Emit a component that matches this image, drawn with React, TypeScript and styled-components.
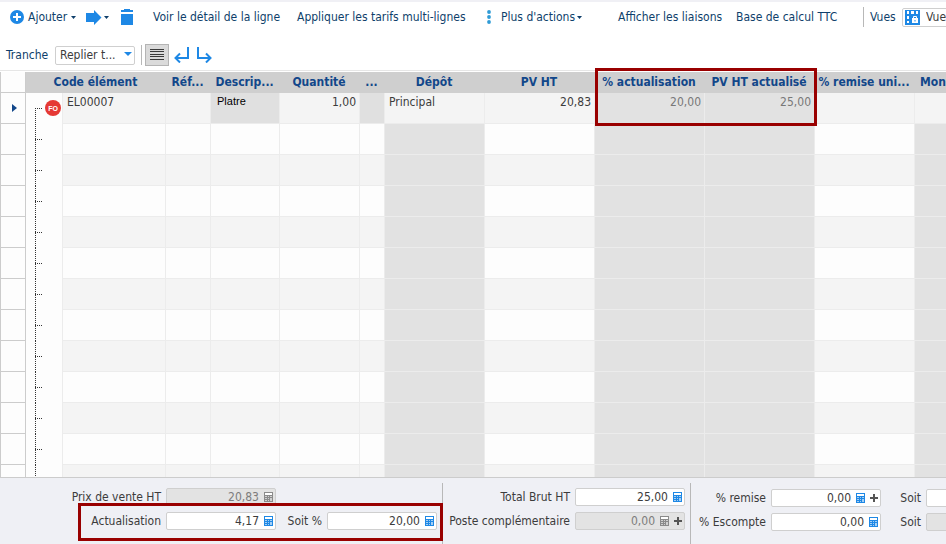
import React, { useId } from 'react';
import styled, { createGlobalStyle, css } from 'styled-components';

const BLUE = '#1e88e5';
const NAVY = '#0f3f6b';
const INK = '#3c3c3c';
const LINE = '#ececec';
const MARK = '#990000';

const GlobalStyle = createGlobalStyle`
  *, *::before, *::after { box-sizing: border-box; }
  body { margin: 0; overflow: hidden; background: #fff; }
  body, button, input, select {
    font-family: 'DejaVu Sans Condensed', 'Noto Sans', sans-serif;
    font-size: 12px;
    line-height: 16px;
  }
  svg { display: block; flex: none; }
`;

const Page = styled.div`
  display: flex;
  flex-direction: column;
  height: 100vh;
  overflow: hidden;
  color: ${NAVY};
  border-top: 2px solid #f0f0f5;
`;

const Toolbar = styled.div<{ $left: number; $top?: number }>`
  display: flex;
  flex: none;
  align-items: center;
  height: ${p => (p.$top ? 38 : 30)}px;
  padding: ${p => p.$top ?? 0}px 0 0 ${p => p.$left}px;
  white-space: nowrap;
`;

const ToolButton = styled.button<{ $width: number; $gap?: number }>`
  display: flex;
  flex: none;
  align-items: center;
  gap: ${p => p.$gap ?? 2}px;
  width: ${p => p.$width}px;
  height: 22px;
  padding: 0;
  border: 0;
  background: none;
  color: inherit;
  white-space: nowrap;
`;

const ToggleButton = styled.button`
  display: flex;
  flex: none;
  align-items: center;
  justify-content: center;
  width: 24px;
  height: 22px;
  margin: 0 5px 0 3px;
  padding: 0;
  border: 1px solid #b4b4b4;
  background: #dadada;
`;

const Separator = styled.span`
  flex: none;
  width: 1px;
  height: 20px;
  background: #b8b8b8;
`;

const ToolLabel = styled.label<{ $width: number }>`
  flex: none;
  width: ${p => p.$width}px;
`;

const ViewLabel = styled(ToolLabel)`
  padding-left: 6px;
`;

const Spacer = styled.span`
  flex: none;
  width: 6px;
`;

const SelectBox = styled.span<{ $width: number }>`
  display: flex;
  flex: none;
  align-items: center;
  width: ${p => p.$width}px;
  height: 19px;
  padding: 0 2px;
  border: 1px solid #cfcfcf;
  border-radius: 2px;
  background: #fff;
`;

const Select = styled.select<{ $indent: number }>`
  flex: 1;
  min-width: 0;
  height: 17px;
  padding: 0 0 0 ${p => p.$indent}px;
  border: 0;
  background: none;
  color: ${INK};
  appearance: none;
`;

const GridPanel = styled.main`
  position: relative;
  flex: 1;
  min-height: 0;
  border-top: 1px solid #e6e6e6;
`;

const GridClip = styled.div`
  height: 100%;
  padding-top: 1px;
  overflow: hidden;
`;

const Table = styled.table`
  width: 1014px;
  table-layout: fixed;
  border-collapse: separate;
  border-spacing: 0;
`;

const HeadCell = styled.th<{ $start?: boolean }>`
  height: 21px;
  padding: 0 ${p => (p.$start ? 6 : 4)}px 2px;
  background: #cfcfcf;
  color: #12478a;
  font-weight: bold;
  text-align: ${p => (p.$start ? 'left' : 'center')};
  white-space: nowrap;
`;

const RowMarker = styled.td`
  padding: 0 0 0 11px;
  border: solid #cccccc;
  border-width: 0 1px 1px;
  background: #fdfdfd;
  vertical-align: middle;
`;

const TreeCell = styled.td`
  padding: 0;
  background: #fdfdfd;
`;

type Tone = 'plain' | 'locked' | 'shade';

const Cell = styled.td<{ $tone: Tone; $odd: boolean; $right?: boolean; $muted?: boolean; $small?: boolean }>`
  height: 31px;
  padding: 1px 3px 0 4px;
  border: solid ${LINE};
  border-width: 0 0 1px 1px;
  background: ${p => (p.$tone === 'locked' ? '#e2e2e2' : p.$tone === 'shade' ? '#e0e0e0' : p.$odd ? '#f4f4f4' : '#fdfdfd')};
  color: ${p => (p.$muted ? '#787878' : INK)};
  text-align: ${p => (p.$right ? 'right' : 'left')};
  vertical-align: top;
  white-space: nowrap;
  ${p => p.$small && css`
    padding: 0 3px 0 6px;
    color: #000;
    font-family: 'Liberation Sans', sans-serif;
    font-size: 11px;
  `}
`;

const Highlight = styled.div<{ $left: number; $top: number; $width: number; $height: number }>`
  position: absolute;
  z-index: 1;
  left: ${p => p.$left}px;
  top: ${p => p.$top}px;
  width: ${p => p.$width}px;
  height: ${p => p.$height}px;
  border: 3px solid ${MARK};
  pointer-events: none;
`;

const Footer = styled.footer`
  display: flex;
  flex: none;
  height: 67px;
  padding-top: 5px;
  border-top: 1px solid #cccccc;
  background: #eff0f5;
  color: ${INK};
`;

const TotalsGroup = styled.section<{ $columns: string; $top: number; $divided?: boolean }>`
  position: relative;
  display: grid;
  flex: none;
  grid-template-columns: ${p => p.$columns};
  grid-auto-rows: 18px;
  align-items: center;
  gap: 6px 5px;
  padding: ${p => p.$top}px 5px 0 0;
  border-left: ${p => (p.$divided ? '1px solid #b8b8b8' : '0')};
`;

const FieldLabel = styled.label`
  text-align: right;
  white-space: nowrap;
`;

const FieldBox = styled.span<{ $off?: boolean }>`
  display: flex;
  align-items: center;
  gap: 5px;
  height: 18px;
  padding-right: 2px;
  border: 1px solid #cfcfcf;
  border-radius: 2px;
  background: ${p => (p.$off ? '#e3e3e3' : '#fff')};
`;

const FieldInput = styled.input`
  flex: 1;
  min-width: 0;
  height: 16px;
  padding: 0;
  border: 0;
  background: none;
  color: ${INK};
  text-align: right;
  &:disabled { color: #7c7c7c; }
`;

const IconButton = styled.button`
  display: flex;
  flex: none;
  padding: 0;
  border: 0;
  background: none;
`;

const Caret = () => (
  <svg width="5" height="3" viewBox="0 0 5 3" aria-hidden="true">
    <path d="M0 0h5L2.500 3z" fill={NAVY} />
  </svg>
);

const SelectCaret = () => (
  <svg width="8" height="14" viewBox="0 0 8 14" aria-hidden="true">
    <path d="M0 4h8L4 8z" fill={BLUE} />
  </svg>
);

const AddIcon = () => (
  <svg width="14" height="14" viewBox="0 0 14 14" aria-hidden="true">
    <circle cx="7" cy="7" r="7" fill={BLUE} />
    <path d="M7 3v8M3 7h8" stroke="#fff" strokeWidth="2" />
  </svg>
);

const ArrowIcon = () => (
  <svg width="17" height="16" viewBox="0 0 17 16" aria-hidden="true">
    <path d="M1 4h8V1l7.500 7.500L9 16v-3H1z" fill={BLUE} />
  </svg>
);

const TrashIcon = () => (
  <svg width="12" height="16" viewBox="0 0 12 16" aria-hidden="true">
    <path d="M0 1h3V0h6v1h3v2H0zM0 5h12v11H0z" fill={BLUE} />
  </svg>
);

const DotsIcon = () => (
  <svg width="4" height="14" viewBox="0 0 4 14" aria-hidden="true">
    <g fill="#2f9bd6">
      <circle cx="2" cy="2" r="1.9" />
      <circle cx="2" cy="7" r="1.9" />
      <circle cx="2" cy="12" r="1.9" />
    </g>
  </svg>
);

const ViewIcon = () => (
  <svg width="15" height="15" viewBox="0 0 15 15" aria-hidden="true">
    <path d="M0 0h15v15H0z" fill={BLUE} />
    <path d="M2 1h2v3H2zM6 1h3v3H6zM11 1h2v3h-2zM2 6h2v3H2zM2 11h2v2H2z" fill="#fff" />
    <path d="M7 8h6v5H7z" fill="#fff" />
    <path d="M8.500 8V6.500h3V8" fill="none" stroke="#fff" />
    <path d="M9.500 10h1v1.500h-1z" fill={BLUE} />
  </svg>
);

const LinesIcon = () => (
  <svg width="14" height="12" viewBox="0 0 14 12" aria-hidden="true">
    <path d="M0 .5h14M0 2.500h14M0 5.500h14M0 7.500h14M0 10.500h14" stroke="#3a3a3a" />
  </svg>
);

const ReturnIcon = () => (
  <svg width="15" height="16" viewBox="0 0 15 16" fill="none" stroke={BLUE} strokeWidth="2" aria-hidden="true">
    <path d="M14 0v11H2M6 6.500 1.500 11 6 15.500" />
  </svg>
);

const ForwardIcon = () => (
  <svg width="15" height="16" viewBox="0 0 15 16" fill="none" stroke={BLUE} strokeWidth="2" aria-hidden="true">
    <path d="M1 0v11h12M9 6.500l4.500 4.500L9 15.500" />
  </svg>
);

const CalculatorIcon = ({ color }: { color: string }) => (
  <svg width="9" height="10" viewBox="0 0 9 10" aria-hidden="true">
    <path d="M0 0h9v10H0z" fill={color} />
    <path d="M1 1h7v2H1z" fill="#fff" />
    <path d="M1 4h2v1H1zM4 4h1v1H4zM6 4h2v1H6zM1 6h2v1H1zM4 6h1v1H4zM1 8h2v1H1zM4 8h1v1H4zM6 6h2v3H6z" fill="#fff" opacity=".6" />
  </svg>
);

const PlusIcon = () => (
  <svg width="8" height="8" viewBox="0 0 8 8" aria-hidden="true">
    <path d="M4 0v8M0 4h8" stroke="#555" strokeWidth="2" />
  </svg>
);

const TreeBranch = ({ first }: { first: boolean }) => (
  <svg width="36" height="31" viewBox="0 0 36 31" aria-hidden="true">
    <path d={first ? 'M9.500 15v16M9 15.500h8' : 'M9.500 0v31M9 15.500h8'} stroke="#333" strokeDasharray="1 1" fill="none" />
    {first && (
      <>
        <circle cx="27" cy="15" r="8" fill="#e53935" />
        <text x="27" y="17.500" textAnchor="middle" fontFamily="Liberation Sans, sans-serif" fontSize="7" fontWeight="bold" fill="#fff">FO</text>
      </>
    )}
  </svg>
);

const WIDTHS = [26, 36, 103, 45, 69, 80, 25, 100, 110, 110, 110, 100, 100];
const HEADERS = ['Réf...', 'Descrip...', 'Quantité', '...', 'Dépôt', 'PV HT', '% actualisation', 'PV HT actualisé', '% remise uni...'];
const FIRST = ['EL00007', '', 'Platre', '1,00', '', 'Principal', '20,83', '20,00', '25,00', '', ''];
const ROWS = Array.from({ length: 40 }, (_, i) => i);

function toneOf(row: number, column: number): Tone {
  if (column === 7 || column === 8) return 'locked';
  if (row === 0) return column === 2 || column === 4 ? 'shade' : 'plain';
  return column === 5 || column === 10 ? 'locked' : 'plain';
}

function Field({ label, value, off, plus }: { label: string; value: string; off?: boolean; plus?: boolean }) {
  const id = useId();
  return (
    <>
      <FieldLabel htmlFor={id}>{label}</FieldLabel>
      <FieldBox $off={off}>
        <FieldInput id={id} defaultValue={value} disabled={off} />
        <IconButton type="button" aria-label="Calculatrice"><CalculatorIcon color={off ? '#8a8a8a' : BLUE} /></IconButton>
        {plus && <IconButton type="button" aria-label="Plus"><PlusIcon /></IconButton>}
      </FieldBox>
    </>
  );
}

export default function App() {
  return (
    <Page>
      <GlobalStyle />
      <Toolbar $left={10}>
        <ToolButton $width={75} $gap={4}><AddIcon />Ajouter<Caret /></ToolButton>
        <ToolButton $width={36} aria-label="Envoyer"><ArrowIcon /><Caret /></ToolButton>
        <ToolButton $width={32} aria-label="Supprimer"><TrashIcon /></ToolButton>
        <ToolButton $width={144}>Voir le détail de la ligne</ToolButton>
        <ToolButton $width={190}>Appliquer les tarifs multi-lignes</ToolButton>
        <ToolButton $width={131}><DotsIcon /><Spacer />Plus d'actions<Caret /></ToolButton>
        <ToolButton $width={118}>Afficher les liaisons</ToolButton>
        <ToolButton $width={127}>Base de calcul TTC</ToolButton>
        <Separator />
        <ViewLabel $width={38} htmlFor="view">Vues</ViewLabel>
        <SelectBox $width={140}>
          <ViewIcon />
          <Select id="view" $indent={6}><option>Vue</option></Select>
        </SelectBox>
      </Toolbar>
      <Toolbar $left={6} $top={8}>
        <ToolLabel $width={49} htmlFor="section">Tranche</ToolLabel>
        <SelectBox $width={80}>
          <Select id="section" $indent={2}><option>Replier t...</option></Select>
          <SelectCaret />
        </SelectBox>
        <Spacer />
        <Separator />
        <ToggleButton type="button" aria-label="Lignes"><LinesIcon /></ToggleButton>
        <ToolButton $width={23} aria-label="Retour"><ReturnIcon /></ToolButton>
        <ToolButton $width={23} aria-label="Suite"><ForwardIcon /></ToolButton>
      </Toolbar>

      <GridPanel>
        <GridClip>
          <Table>
            <colgroup>{WIDTHS.map((w, i) => <col key={i} width={w} />)}</colgroup>
            <thead>
              <tr>
                <RowMarker />
                <HeadCell colSpan={2}>Code élément</HeadCell>
                {HEADERS.map(h => <HeadCell key={h}>{h}</HeadCell>)}
                <HeadCell $start>Mon</HeadCell>
              </tr>
            </thead>
            <tbody>
              {ROWS.map(row => (
                <tr key={row}>
                  <RowMarker>
                    {row === 0 && <svg width="5" height="8" viewBox="0 0 5 8"><path d="M0 0l5 4-5 4z" fill="#12478a" /></svg>}
                  </RowMarker>
                  <TreeCell><TreeBranch first={row === 0} /></TreeCell>
                  {FIRST.map((text, column) => (
                    <Cell
                      key={column}
                      $tone={toneOf(row, column)}
                      $odd={row % 2 === 0}
                      $right={column === 3 || (column > 5 && column < 10)}
                      $muted={column === 7 || column === 8}
                      $small={column === 2}
                    >
                      {row === 0 ? text : ''}
                    </Cell>
                  ))}
                </tr>
              ))}
            </tbody>
          </Table>
        </GridClip>
        <Highlight $left={595} $top={-3} $width={222} $height={58} />
      </GridPanel>

      <Footer>
        <TotalsGroup $columns="161px 110px 41px 110px" $top={5}>
          <Field label="Prix de vente HT" value="20,83" off />
          <span /><span />
          <Field label="Actualisation" value="4,17" />
          <Field label="Soit %" value="20,00" />
          <Highlight $left={78} $top={20} $width={365} $height={38} />
        </TotalsGroup>
        <TotalsGroup $columns="127px 110px" $top={5} $divided>
          <Field label="Total Brut HT" value="25,00" />
          <Field label="Poste complémentaire" value="0,00" off plus />
        </TotalsGroup>
        <TotalsGroup $columns="75px 110px 35px 110px" $top={6} $divided>
          <Field label="% remise" value="0,00" plus />
          <Field label="Soit" value="0,00" />
          <Field label="% Escompte" value="0,00" />
          <Field label="Soit" value="0,00" off />
        </TotalsGroup>
      </Footer>
    </Page>
  );
}
